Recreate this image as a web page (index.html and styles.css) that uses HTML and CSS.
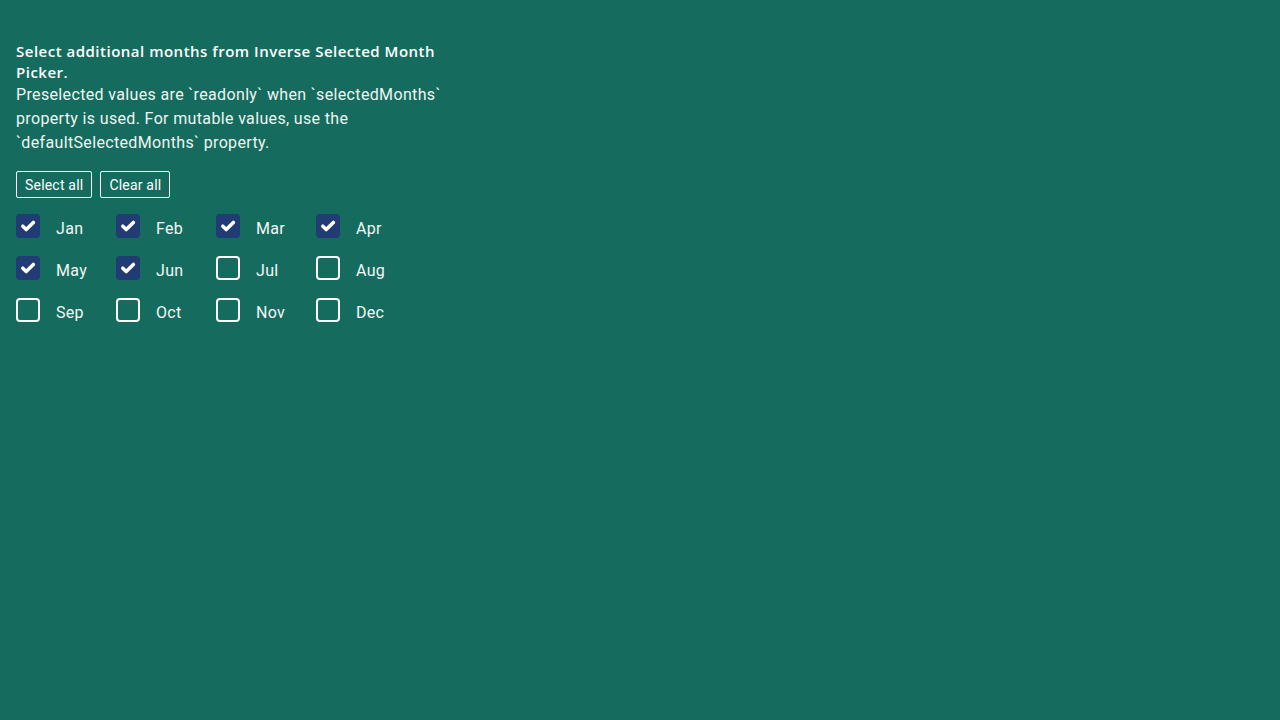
FILE: index.html
```html
<!DOCTYPE html>
<html lang="en">
<head>
<meta charset="utf-8">
<title>Month Picker</title>
<link rel="stylesheet" href="styles.css">
</head>
<body>
<main class="page">
  <h1 class="title">Select additional months from Inverse Selected Month Picker.</h1>
  <p class="desc">Preselected values are `readonly` when `selectedMonths` property is used. For mutable values, use the `defaultSelectedMonths` property.</p>
  <div class="actions">
    <button class="btn">Select all</button>
    <button class="btn">Clear all</button>
  </div>
  <div class="months">
    <label class="month"><span class="box checked"><svg viewBox="0 0 24 24"><path d="M6.8 12.2l3.4 3.4L17.4 8.4" /></svg></span><span class="name">Jan</span></label>
    <label class="month"><span class="box checked"><svg viewBox="0 0 24 24"><path d="M6.8 12.2l3.4 3.4L17.4 8.4" /></svg></span><span class="name">Feb</span></label>
    <label class="month"><span class="box checked"><svg viewBox="0 0 24 24"><path d="M6.8 12.2l3.4 3.4L17.4 8.4" /></svg></span><span class="name">Mar</span></label>
    <label class="month"><span class="box checked"><svg viewBox="0 0 24 24"><path d="M6.8 12.2l3.4 3.4L17.4 8.4" /></svg></span><span class="name">Apr</span></label>
    <label class="month"><span class="box checked"><svg viewBox="0 0 24 24"><path d="M6.8 12.2l3.4 3.4L17.4 8.4" /></svg></span><span class="name">May</span></label>
    <label class="month"><span class="box checked"><svg viewBox="0 0 24 24"><path d="M6.8 12.2l3.4 3.4L17.4 8.4" /></svg></span><span class="name">Jun</span></label>
    <label class="month"><span class="box"></span><span class="name">Jul</span></label>
    <label class="month"><span class="box"></span><span class="name">Aug</span></label>
    <label class="month"><span class="box"></span><span class="name">Sep</span></label>
    <label class="month"><span class="box"></span><span class="name">Oct</span></label>
    <label class="month"><span class="box"></span><span class="name">Nov</span></label>
    <label class="month"><span class="box"></span><span class="name">Dec</span></label>
  </div>
</main>
</body>
</html>
```
FILE: styles.css
```css
html, body {
  margin: 0;
  padding: 0;
  background: #156c5e;
  color: #ffffff;
  font-family: "Roboto", "Liberation Sans", sans-serif;
}
.page {
  padding: 41px 16px 16px;
  width: 436px;
}
.title {
  margin: 0;
  font-family: "Open Sans", "Liberation Sans", sans-serif;
  font-size: 15px;
  font-weight: 600;
  line-height: 21px;
  letter-spacing: 0.5px;
}
.desc {
  margin: 0;
  font-size: 16px;
  line-height: 24px;
  letter-spacing: 0.35px;
  color: #eef5f3;
}
.actions {
  display: flex;
  gap: 8px;
  margin-top: 16px;
}
.btn {
  height: 27px;
  padding: 0 8px;
  background: transparent;
  border: 1px solid #ffffff;
  border-radius: 2px;
  color: #ffffff;
  font-family: "Roboto", "Liberation Sans", sans-serif;
  font-size: 14px;
  letter-spacing: 0.2px;
}
.months {
  display: grid;
  grid-template-columns: repeat(4, 100px);
  row-gap: 18px;
  margin-top: 16px;
}
.month {
  display: flex;
  align-items: center;
  gap: 16px;
  height: 24px;
}
.box {
  width: 24px;
  height: 24px;
  box-sizing: border-box;
  border: 2px solid #ffffff;
  border-radius: 4px;
  display: flex;
  align-items: center;
  justify-content: center;
}
.box.checked {
  background: #213b74;
  border: none;
}
.box svg {
  width: 24px;
  height: 24px;
  fill: none;
  stroke: #ffffff;
  stroke-width: 3.5;
  stroke-linecap: round;
  stroke-linejoin: round;
}
.name {
  font-size: 16px;
  letter-spacing: 0.3px;
  padding-top: 5px;
  color: #f3f7f6;
}
```
